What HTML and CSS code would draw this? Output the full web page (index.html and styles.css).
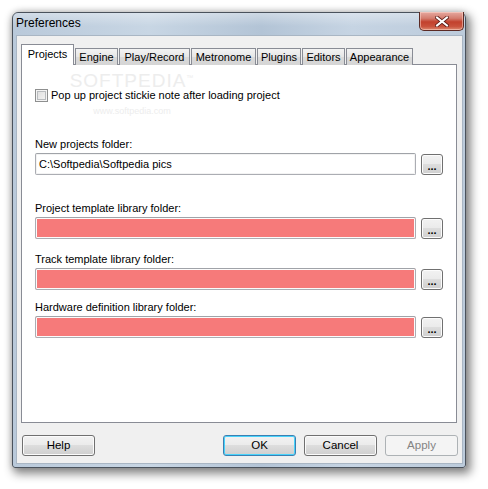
FILE: index.html
```html
<!DOCTYPE html>
<html>
<head>
<meta charset="utf-8">
<link rel="stylesheet" href="styles.css">
</head>
<body>
<div class="window">
  <div class="titlebar">
    <span class="title">Preferences</span>
    <div class="close">
      <svg width="14" height="11" viewBox="0 0 14 11">
        <path d="M2 1.5 L12 9.5 M12 1.5 L2 9.5" stroke="#5a1a14" stroke-width="3.6" stroke-linecap="square" fill="none"/>
        <path d="M2 1.5 L12 9.5 M12 1.5 L2 9.5" stroke="#ffffff" stroke-width="2" stroke-linecap="square" fill="none"/>
      </svg>
    </div>
  </div>
  <div class="client">
    <div class="tabs">
      <div class="tab active t-projects">Projects</div>
      <div class="tab t-engine">Engine</div>
      <div class="tab t-play">Play/Record</div>
      <div class="tab t-metro">Metronome</div>
      <div class="tab t-plugins">Plugins</div>
      <div class="tab t-editors">Editors</div>
      <div class="tab t-appear">Appearance</div>
    </div>
    <div class="panel">
      <div class="watermark">
        <span class="wm-big">SOFTPEDIA<sup>™</sup></span>
        <span class="wm-small">www.softpedia.com</span>
      </div>
      <label class="check-row"><span class="checkbox"></span><span>Pop up project stickie note after loading project</span></label>
      <div class="group first">
        <div class="label">New projects folder:</div>
        <div class="row"><div class="field">C:\Softpedia\Softpedia pics</div><div class="browse">...</div></div>
      </div>
      <div class="group second">
        <div class="label">Project template library folder:</div>
        <div class="row"><div class="field error"></div><div class="browse">...</div></div>
      </div>
      <div class="group third">
        <div class="label">Track template library folder:</div>
        <div class="row"><div class="field error"></div><div class="browse">...</div></div>
      </div>
      <div class="group fourth">
        <div class="label">Hardware definition library folder:</div>
        <div class="row"><div class="field error"></div><div class="browse">...</div></div>
      </div>
    </div>
    <div class="buttons">
      <div class="btn">Help</div>
      <div class="spacer"></div>
      <div class="btn default">OK</div>
      <div class="btn">Cancel</div>
      <div class="btn disabled">Apply</div>
    </div>
  </div>
</div>
</body>
</html>
```

FILE: styles.css
```css
* { box-sizing: border-box; }
html, body { margin: 0; padding: 0; }
body {
  width: 488px;
  height: 489px;
  overflow: hidden;
  background: #ffffff;
  font-family: "Liberation Sans", Arial, sans-serif;
  font-size: 11px;
  color: #000;
}
.window {
  margin: 12px 0 0 12px;
  width: 454px;
  height: 456px;
  border: 1px solid #4a525c;
  border-radius: 6px 6px 3px 3px;
  background: linear-gradient(to right, #b9c9da 0%, #c8d6e4 30%, #b3c4d6 55%, #c6d4e3 75%, #bccbdb 100%);
  box-shadow: 3px 4px 10px 2px rgba(0,0,0,0.45), 0 0 6px rgba(0,0,0,0.15);
  display: flex;
  flex-direction: column;
}
.titlebar {
  height: 22px;
  flex: none;
  display: flex;
  justify-content: space-between;
  align-items: flex-start;
  padding-left: 3px;
  background: linear-gradient(rgba(255,255,255,0.35), rgba(255,255,255,0) 60%);
  border-radius: 5px 5px 0 0;
}
.title {
  line-height: 21px;
  font-size: 12px;
  color: #000;
}
.close {
  width: 45px;
  height: 19px;
  margin-right: 1px;
  margin-top: -1px;
  border: 1px solid #5b2a24;
  border-top: none;
  border-radius: 0 0 5px 5px;
  background: linear-gradient(#e6a9a0 0%, #d47d6f 35%, #c2412d 55%, #c9523c 80%, #dd8a70 100%);
  box-shadow: inset 0 0 0 1px rgba(255,220,210,0.5);
  display: flex;
  align-items: center;
  justify-content: center;
}
.close svg { display: block; margin-top: 1px; }
.client {
  flex: 1;
  margin: 0 2px 3px 3px;
  background: #f0f0f0;
  border: 1px solid #a9b6c4;
  padding: 9px 5px 0 4px;
  display: flex;
  flex-direction: column;
}
.tabs {
  display: flex;
  align-items: flex-end;
  height: 20px;
  position: relative;
  z-index: 2;
  margin-bottom: -1px;
}
.tab {
  height: 17px;
  line-height: 16px;
  text-align: center;
  border: 1px solid #898c95;
  border-bottom: none;
  background: linear-gradient(#f3f3f3, #e6e6e6 50%, #dadada 51%, #d5d5d5);
  margin-right: 1px;
  white-space: nowrap;
}
.tab.active {
  height: 21px;
  line-height: 18px;
  background: #ffffff;
  margin-right: 1px;
}
.t-projects { width: 53px; }
.t-engine { width: 43px; }
.t-play { width: 71px; }
.t-metro { width: 65px; }
.t-plugins { width: 44px; }
.t-editors { width: 43px; }
.t-appear { width: 67px; }
.panel {
  height: 359px;
  background: #ffffff;
  border: 1px solid #898c95;
  position: relative;
  padding: 23px 12px 0 13px;
  display: flex;
  flex-direction: column;
}
.watermark {
  position: absolute;
  left: 50px;
  top: 4px;
  width: 120px;
  display: flex;
  flex-direction: column;
  align-items: center;
  color: #ededed;
  pointer-events: none;
}
.wm-big { font-size: 19px; letter-spacing: 1px; line-height: 18px; }
.wm-big sup { font-size: 7px; }
.wm-small { font-size: 9px; line-height: 11px; margin-top: 16px; }
.check-row {
  display: flex;
  align-items: center;
  gap: 3px;
  height: 14px;
  position: relative;
}
.checkbox {
  width: 13px;
  height: 13px;
  border: 1px solid #8e8f8f;
  background: linear-gradient(135deg, #dcdcdc, #f6f6f6);
  box-shadow: inset 0 0 0 1px #f4f4f4, inset 0 0 0 2px #b9bcbf;
  flex: none;
}
.group { display: flex; flex-direction: column; }
.group.first { margin-top: 36px; }
.group.second { margin-top: 27px; }
.group.third { margin-top: 14px; }
.group.fourth { margin-top: 11px; }
.label { line-height: 13px; margin-bottom: 2px; }
.row { display: flex; align-items: center; gap: 5px; }
.field {
  width: 381px;
  height: 22px;
  border: 1px solid #abadb3;
  border-top-color: #a0a3a8;
  border-radius: 2px;
  background: #ffffff;
  box-shadow: inset 0 0 0 1px #f3f3f3;
  padding: 0 3px;
  line-height: 20px;
}
.field.error {
  background: #f67a7a;
  box-shadow: inset 0 0 0 1px #fbfbfb;
}
.browse {
  width: 22px;
  height: 21px;
  border: 1px solid #707070;
  border-radius: 3px;
  background: linear-gradient(#f2f2f2 0%, #ebebeb 45%, #dddddd 50%, #cfcfcf 100%);
  box-shadow: inset 0 0 0 1px #fcfcfc;
  text-align: center;
  line-height: 22px;
  font-size: 11px;
  font-weight: bold;
  overflow: hidden;
}
.buttons {
  display: flex;
  margin-top: 12px;
  margin-left: 1px;
  margin-right: -1px;
  gap: 8px;
}
.spacer { flex: 1; }
.btn {
  width: 73px;
  height: 21px;
  border: 1px solid #707070;
  border-radius: 3px;
  background: linear-gradient(#f2f2f2 0%, #ebebeb 48%, #dddddd 50%, #cfcfcf 100%);
  box-shadow: inset 0 0 0 1px #fbfbfb;
  text-align: center;
  line-height: 19px;
  font-size: 11.5px;
}
.btn.default {
  border-color: #3c7fb1;
  box-shadow: inset 0 0 0 1px #48d3fb;
}
.btn.disabled {
  border-color: #adb2b5;
  background: #f4f4f4;
  box-shadow: none;
  color: #838383;
}
```
